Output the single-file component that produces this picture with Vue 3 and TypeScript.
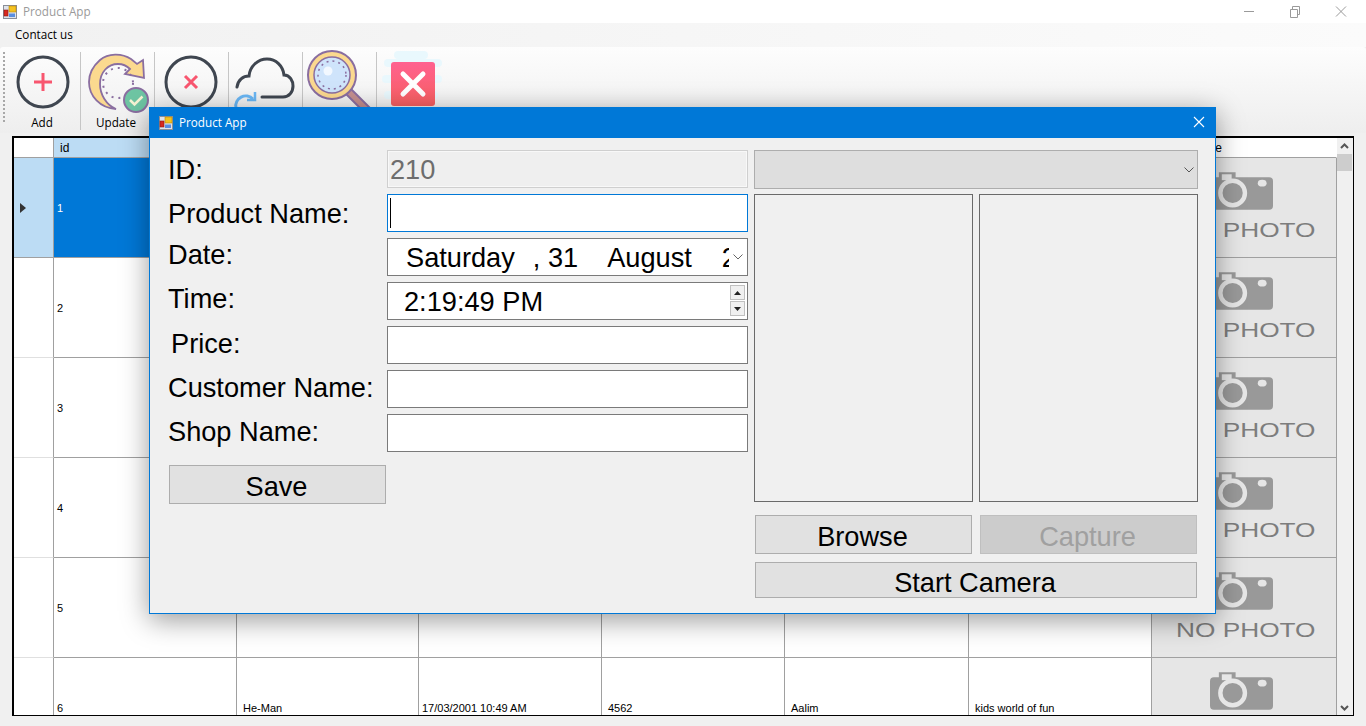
<script setup lang="ts">
interface GridRow {
  id: number
  name: string
  date: string
  price: string
  customer: string
  shop: string
}

const rows: GridRow[] = [
  { id: 1, name: '', date: '', price: '', customer: '', shop: '' },
  { id: 2, name: '', date: '', price: '', customer: '', shop: '' },
  { id: 3, name: '', date: '', price: '', customer: '', shop: '' },
  { id: 4, name: '', date: '', price: '', customer: '', shop: '' },
  { id: 5, name: '', date: '', price: '', customer: '', shop: '' },
  { id: 6, name: 'He-Man', date: '17/03/2001 10:49 AM', price: '4562', customer: 'Aalim', shop: 'kids world of fun' }
]

const fields = [
  { label: 'ID:', cls: '' },
  { label: 'Product Name:', cls: '' },
  { label: 'Date:', cls: 'up' },
  { label: 'Time:', cls: 'up' },
  { label: 'Price:', cls: 'mid indent' },
  { label: 'Customer Name:', cls: 'mid' },
  { label: 'Shop Name:', cls: 'mid' }
]
</script>

<template>
  <div class="app">
    <header class="titlebar">
      <svg class="app-icon" viewBox="0 0 14 14">
        <rect x="0.5" y="0.5" width="13" height="13" fill="#dfe3ea" stroke="#8a8f99" />
        <rect x="6" y="1" width="7" height="6" fill="#f5c21f" stroke="#b8860b" stroke-width="0.6" />
        <rect x="1" y="5" width="4" height="6" fill="#d9281e" stroke="#8a1a14" stroke-width="0.6" />
        <rect x="6" y="8.500" width="6" height="3.500" fill="#5a8ee0" />
      </svg>
      <span class="app-title">Product App</span>
      <div class="win-controls">
        <svg width="46" height="20" viewBox="0 0 46 20"><path d="M18 9.500h10" stroke="#9a9a9a" /></svg>
        <svg width="46" height="20" viewBox="0 0 46 20" fill="none" stroke="#9a9a9a"><path d="M18.500 7.500h7v8h-7zM20.500 7.500v-3h7v8h-2" /></svg>
        <svg width="46" height="20" viewBox="0 0 46 20" stroke="#9a9a9a"><path d="M18 4.500l10 10M28 4.500l-10 10" /></svg>
      </div>
    </header>

    <nav class="menubar"><span class="menu-item">Contact us</span></nav>

    <div class="toolbar">
      <div class="grip"></div>
      <div class="tool">
        <svg viewBox="6 49 74 62" class="tool-icon">
          <circle cx="43" cy="82" r="25" fill="none" stroke="#3f4650" stroke-width="3" />
          <path d="M43 73v18M34 82h18" stroke="#f8566f" stroke-width="3" />
        </svg>
        <span class="tool-label">Add</span>
      </div>
      <div class="tool">
        <svg viewBox="80 49 74 62" class="tool-icon">
          <path d="M131 59C122 53 108 53 100 60C92 67 89 74 89 82C89 96 100 108 116 109C106 105 100 94 100 84C100 72 108 64 118 64C123 64 127 66 130 69L125 74L144 78L143 60L137 64Z" fill="#fbd98f" stroke="#8a6ea0" stroke-width="1.800" />
          <circle cx="118" cy="83" r="15" fill="none" stroke="#8a6ea0" stroke-width="2" stroke-dasharray="2 5" />
          <circle cx="136" cy="100" r="12" fill="#6ec5a3" stroke="#8a6ea0" stroke-width="2" />
          <path d="M130 100l4.500 4.500l8-8" fill="none" stroke="#f6f3d4" stroke-width="2.500" />
        </svg>
        <span class="tool-label">Update</span>
      </div>
      <div class="tool">
        <svg viewBox="154 49 74 62" class="tool-icon">
          <circle cx="191" cy="82" r="25" fill="none" stroke="#3f4650" stroke-width="3" />
          <path d="M185 76l12 12M197 76l-12 12" stroke="#f8566f" stroke-width="3" />
        </svg>
      </div>
      <div class="tool">
        <svg viewBox="228 49 74 62" class="tool-icon">
          <path d="M237 87C238 80 243 76 249 76C250 66 258 59 267 59C276 59 283 66 284 75C290 75 293 81 293 86C293 92 289 97 283 97L262 97" fill="none" stroke="#3f4650" stroke-width="3" stroke-linecap="round" />
          <path d="M236 108A10 10 0 0 1 253 99" fill="none" stroke="#6ab7f5" stroke-width="3" />
          <path d="M255 92v8h-8" fill="none" stroke="#6ab7f5" stroke-width="2.500" />
        </svg>
      </div>
      <div class="tool">
        <svg viewBox="302 49 74 62" class="tool-icon">
          <path d="M349 92L371 114" stroke="#8a6ea0" stroke-width="9" stroke-linecap="round" />
          <path d="M349 92L371 114" stroke="#c58f8f" stroke-width="5" stroke-linecap="round" />
          <circle cx="332" cy="75" r="24" fill="#fbd98f" stroke="#8a6ea0" stroke-width="2" />
          <circle cx="332" cy="75" r="18" fill="#cfe4fb" stroke="#8a6ea0" stroke-width="1.500" />
          <circle cx="332" cy="75" r="14" fill="none" stroke="#8a6ea0" stroke-width="1.500" stroke-dasharray="2 4" />
          <circle cx="328" cy="71" r="4.500" fill="#f2f8ff" />
        </svg>
      </div>
      <div class="tool last">
        <svg viewBox="376 49 74 62" class="tool-icon">
          <g fill="#e9f8fd">
            <rect x="394" y="51" width="34" height="8" rx="4" />
            <rect x="384" y="59" width="58" height="8" rx="4" />
            <rect x="382" y="75" width="60" height="8" rx="4" />
            <rect x="384" y="91" width="54" height="8" rx="4" />
          </g>
          <defs>
            <linearGradient id="closeFill" x1="0" y1="0" x2="0" y2="1">
              <stop offset="0" stop-color="#ff6190" />
              <stop offset="1" stop-color="#f86060" />
            </linearGradient>
          </defs>
          <rect x="391" y="62" width="44" height="44" rx="3" fill="url(#closeFill)" />
          <path d="M403 74l20 20M423 74l-20 20" stroke="#fff" stroke-width="5" stroke-linecap="round" />
        </svg>
      </div>
    </div>

    <section class="grid">
      <div class="cell head corner"></div>
      <div class="cell head selected-head pad-s">id</div>
      <div class="cell head selected-head"></div>
      <div class="cell head selected-head"></div>
      <div class="cell head selected-head"></div>
      <div class="cell head selected-head"></div>
      <div class="cell head selected-head"></div>
      <div class="cell head image-head">photo image</div>
      <div class="scrollbar">
        <svg class="chevron" width="15" height="15" viewBox="0 0 15 15"><path d="M4 9l3.500-3.500L11 9" fill="none" stroke="#555" stroke-width="2" /></svg>
        <div class="thumb"></div>
        <div class="track"></div>
        <svg class="chevron" width="15" height="15" viewBox="0 0 15 15"><path d="M4 6l3.500 3.500L11 6" fill="none" stroke="#555" stroke-width="2" /></svg>
      </div>

      <template v-for="(row, i) in rows" :key="row.id">
        <div class="cell row-head" :class="{ current: i === 0 }">
          <svg v-if="i === 0" width="6" height="10" viewBox="0 0 6 10"><path d="M0 0l6 5l-6 5z" fill="#333" /></svg>
        </div>
        <div class="cell pad-s" :class="{ selected: i === 0 }">{{ row.id }}</div>
        <div class="cell pad-m" :class="{ selected: i === 0 }">{{ row.name }}</div>
        <div class="cell pad-s" :class="{ selected: i === 0 }">{{ row.date }}</div>
        <div class="cell pad-m" :class="{ selected: i === 0 }">{{ row.price }}</div>
        <div class="cell pad-m" :class="{ selected: i === 0 }">{{ row.customer }}</div>
        <div class="cell pad-m" :class="{ selected: i === 0 }">{{ row.shop }}</div>
        <div class="cell photo">
          <svg class="camera" width="63" height="38" viewBox="0 0 64 38">
            <path d="M9 0h17v5h34a4 4 0 0 1 4 4v25a4 4 0 0 1-4 4H4a4 4 0 0 1-4-4V9a4 4 0 0 1 4-4h5z" fill="#999" />
            <rect x="12" y="2" width="10" height="6" fill="#e6e6e6" />
            <circle cx="23" cy="21" r="12.500" fill="#999" stroke="#e6e6e6" stroke-width="4.500" />
            <ellipse cx="53" cy="11" rx="4.500" ry="3.500" fill="#e6e6e6" />
          </svg>
          <span class="no-photo">NO PHOTO</span>
        </div>
      </template>
    </section>

    <div class="dialog">
      <div class="dialog-title">
        <svg class="app-icon" viewBox="0 0 14 14">
          <rect x="0.5" y="0.5" width="13" height="13" fill="#dfe3ea" stroke="#8a8f99" />
          <rect x="6" y="1" width="7" height="6" fill="#f5c21f" stroke="#b8860b" stroke-width="0.6" />
          <rect x="1" y="5" width="4" height="6" fill="#d9281e" stroke="#8a1a14" stroke-width="0.6" />
          <rect x="6" y="8.500" width="6" height="3.500" fill="#5a8ee0" />
        </svg>
        <span class="dialog-name">Product App</span>
        <svg class="dialog-close" width="12" height="12" viewBox="0 0 12 12"><path d="M1 1l10 10M11 1L1 11" stroke="#fff" stroke-width="1.100" /></svg>
      </div>

      <div class="dialog-body">
        <div class="form">
          <div class="labels">
            <div v-for="f in fields" :key="f.label" class="label" :class="f.cls">{{ f.label }}</div>
          </div>
          <div class="inputs">
            <div class="input disabled">210</div>
            <div class="input focused"><span class="caret"></span></div>
            <div class="input date">
              <span class="date-part day">Saturday</span>
              <span class="date-part num">, 31</span>
              <span class="date-part month">August</span>
              <span class="date-part year">2</span>
              <svg class="drop" width="12" height="8" viewBox="0 0 12 8"><path d="M1.500 1.500L6 6l4.500-4.500" fill="none" stroke="#666" /></svg>
            </div>
            <div class="input time">
              <span class="time-text">2:19:49 PM</span>
              <div class="spinner">
                <div class="spin"><svg width="7" height="4" viewBox="0 0 7 4"><path d="M0 4l3.500-4L7 4z" fill="#222" /></svg></div>
                <div class="spin"><svg width="7" height="4" viewBox="0 0 7 4"><path d="M0 0l3.500 4L7 0z" fill="#222" /></svg></div>
              </div>
            </div>
            <div class="input"></div>
            <div class="input"></div>
            <div class="input"></div>
          </div>
          <button class="btn save">Save</button>
        </div>

        <div class="media">
          <div class="combo">
            <svg width="12" height="8" viewBox="0 0 12 8"><path d="M1.500 1.500L6 6l4.500-4.500" fill="none" stroke="#555" /></svg>
          </div>
          <div class="pictures">
            <div class="picture"></div>
            <div class="picture"></div>
          </div>
          <div class="media-actions">
            <button class="btn browse">Browse</button>
            <button class="btn browse capture">Capture</button>
            <button class="btn camera-btn">Start Camera</button>
          </div>
        </div>
      </div>
    </div>
  </div>
</template>

<style>
html,
body {
  margin: 0;
  background: #f0f0f0;
  overflow: hidden;
}
</style>

<style scoped>
.app {
  position: relative;
  width: 1366px;
  height: 726px;
  overflow: hidden;
  background: #f0f0f0;
  font-family: "Liberation Sans", Arial, sans-serif;
  color: #000;
}

.titlebar {
  display: flex;
  align-items: center;
  height: 23px;
  padding-left: 3px;
  background: #fff;
  box-sizing: border-box;
}

.app-icon {
  width: 14px;
  height: 14px;
  flex-shrink: 0;
}

.app-title {
  margin-left: 6px;
  padding-bottom: 1px;
  font-family: "Open Sans", sans-serif;
  font-size: 11.700px;
  color: #9a9a9a;
}

.win-controls {
  display: flex;
  margin-left: auto;
  margin-right: 2px;
}

.menubar {
  display: flex;
  align-items: center;
  height: 24px;
  padding-left: 15px;
  background: linear-gradient(to right, #f1f1f1, #fbfbfb);
  box-sizing: border-box;
}

.menu-item {
  padding-bottom: 2px;
  font-family: "Open Sans", sans-serif;
  font-size: 11.700px;
}

.toolbar {
  display: flex;
  height: 86px;
  padding-top: 2px;
  box-sizing: border-box;
  background: linear-gradient(to bottom, #fdfdfd, #eeeeee);
  border-radius: 3px 3px 0 0;
}

.grip {
  width: 6px;
  flex-shrink: 0;
  margin-top: 3px;
  background: repeating-linear-gradient(to bottom, #a8a8a8 0 2px, transparent 2px 4px) 3px 0 / 2px 72px no-repeat;
}

.tool {
  display: flex;
  flex-direction: column;
  align-items: center;
  width: 74px;
  height: 78px;
  margin-top: 3px;
  border-right: 1px solid #c6c6c6;
  margin-right: -1px;
}

.tool.last {
  border-right: 0;
}

.tool-icon {
  width: 74px;
  height: 62px;
  margin-top: -3px;
  overflow: visible;
  flex-shrink: 0;
}

.tool-label {
  margin-top: 3px;
  padding-right: 2px;
  font-family: "Open Sans", sans-serif;
  font-size: 11.700px;
  line-height: 16px;
}

.grid {
  display: grid;
  grid-template-columns: 40px 183px 182px 183px 183px 184px 183px 185px 16px;
  grid-auto-rows: 100px;
  grid-template-rows: 20px;
  width: 1342px;
  height: 580px;
  margin: 3px 0 0 12px;
  border: 1px solid #000;
  border-width: 2px 1px 1px 2px;
  box-sizing: border-box;
  overflow: hidden;
  background: #fff;
}

.cell {
  display: flex;
  align-items: center;
  min-width: 0;
  border-right: 1px solid #a0a0a0;
  border-bottom: 1px solid #a0a0a0;
  box-sizing: border-box;
  background: #fff;
  font-size: 11px;
  white-space: nowrap;
  overflow: hidden;
}

.head {
  font-size: 12px;
}

.selected-head {
  background: #bcdcf4;
}

.image-head {
  padding-left: 4px;
  border-right-color: #fff;
}

.pad-s {
  padding-left: 3px;
}

.pad-m {
  padding-left: 6px;
}

.selected-head.pad-s {
  padding-left: 6px;
}

.row-head {
  justify-content: flex-start;
  padding-left: 6px;
  border-bottom-color: #e0e0e0;
}

.row-head.current {
  background: #bcdcf4;
  border-bottom-color: #a0a0a0;
}

.selected {
  background: #0078d7;
  color: #fff;
}

.photo {
  display: flex;
  flex-direction: column;
  align-items: flex-start;
  background: #e6e6e6;
  padding: 14px 0 0 58px;
}

.camera {
  flex-shrink: 0;
}

.no-photo {
  margin: 10px 0 0 -34px;
  font-size: 21px;
  line-height: 20px;
  color: #7d7d7d;
  transform: scaleX(1.250);
  transform-origin: left center;
}

.scrollbar {
  grid-column: 9;
  grid-row: 1 / span 7;
  display: flex;
  flex-direction: column;
  height: 577px;
  background: #f0f0f0;
}

.chevron {
  flex-shrink: 0;
  margin-top: 1px;
}

.thumb {
  width: 15px;
  height: 17px;
  background: #cdcdcd;
}

.track {
  flex: 1;
}

.dialog {
  position: absolute;
  left: 149px;
  top: 107px;
  width: 1067px;
  height: 507px;
  box-sizing: border-box;
  border: 1px solid #0078d7;
  background: #f0f0f0;
  box-shadow: 0 6px 26px rgba(0, 0, 0, 0.4);
}

.dialog-title {
  display: flex;
  align-items: center;
  height: 30px;
  padding: 0 10px 0 9px;
  background: #0078d7;
  color: #fff;
}

.dialog-name {
  margin-left: 6px;
  padding-bottom: 2px;
  font-family: "Open Sans", sans-serif;
  font-size: 11.700px;
}

.dialog-close {
  margin: -2px 0 0 auto;
}

.dialog-body {
  display: flex;
  align-items: flex-start;
  gap: 6px;
  padding: 12px 0 0 18px;
}

.form {
  display: grid;
  grid-template-columns: 219px 361px;
  row-gap: 13px;
}

.labels,
.inputs {
  display: flex;
  flex-direction: column;
  gap: 6px;
}

.label {
  height: 38px;
  font-size: 27.200px;
  line-height: 40px;
  white-space: nowrap;
}

.label.up {
  margin-top: -3px;
  margin-bottom: 3px;
}

.label.mid {
  margin-top: -2px;
  margin-bottom: 2px;
}

.label.indent {
  margin-left: 3px;
}

.input {
  position: relative;
  display: flex;
  align-items: center;
  height: 38px;
  padding-top: 2px;
  box-sizing: border-box;
  border: 1px solid #7a7a7a;
  background: #fff;
  font-size: 27.200px;
  white-space: nowrap;
  overflow: hidden;
}

.input.disabled {
  padding-left: 2px;
  border: 1px solid #cfcfcf;
  box-shadow: inset 0 0 0 1px #f8f8f8;
  background: #efefef;
  color: #6d6d6d;
}

.input.focused {
  border-color: #0078d7;
  padding: 0 0 0 2px;
}

.caret {
  width: 1px;
  height: 30px;
  background: #000;
}

.date-part {
  flex-shrink: 0;
}

.day {
  margin-left: 18px;
}

.num {
  margin-left: 18px;
}

.month {
  margin-left: 29px;
}

.year {
  margin-left: 30px;
  width: 7px;
  overflow: hidden;
}

.drop {
  position: absolute;
  right: 3px;
  top: 14px;
}

.time-text {
  margin-left: 16px;
}

.spinner {
  position: absolute;
  right: 2px;
  top: 2px;
  display: flex;
  flex-direction: column;
  gap: 1px;
}

.spin {
  display: flex;
  align-items: center;
  justify-content: center;
  width: 15px;
  height: 15px;
  box-sizing: border-box;
  border: 1px solid #c0c0c0;
  background: #f0f0f0;
}

.btn {
  display: block;
  margin: 0;
  padding: 4px 2px 0 0;
  box-sizing: border-box;
  border: 1px solid #adadad;
  background: #e1e1e1;
  font-family: "Liberation Sans", Arial, sans-serif;
  font-size: 27.200px;
  color: #000;
}

.save {
  width: 217px;
  height: 39px;
  margin-left: 1px;
}

.media {
  display: flex;
  flex-direction: column;
  width: 444px;
}

.combo {
  display: flex;
  align-items: center;
  justify-content: flex-end;
  height: 39px;
  padding-right: 2px;
  box-sizing: border-box;
  border: 1px solid #adadad;
  background: #dedede;
}

.pictures {
  display: flex;
  gap: 6px;
  margin-top: 5px;
}

.picture {
  flex: 1;
  height: 308px;
  box-sizing: border-box;
  border: 1px solid #6a6a6a;
}

.media-actions {
  display: grid;
  grid-template-columns: 217px 217px;
  column-gap: 8px;
  row-gap: 8px;
  margin: 13px 0 0 1px;
}

.browse {
  height: 39px;
}

.capture {
  background: #cccccc;
  border-color: #bfbfbf;
  color: #a0a0a0;
}

.camera-btn {
  grid-column: 1 / span 2;
  height: 36px;
}
</style>
